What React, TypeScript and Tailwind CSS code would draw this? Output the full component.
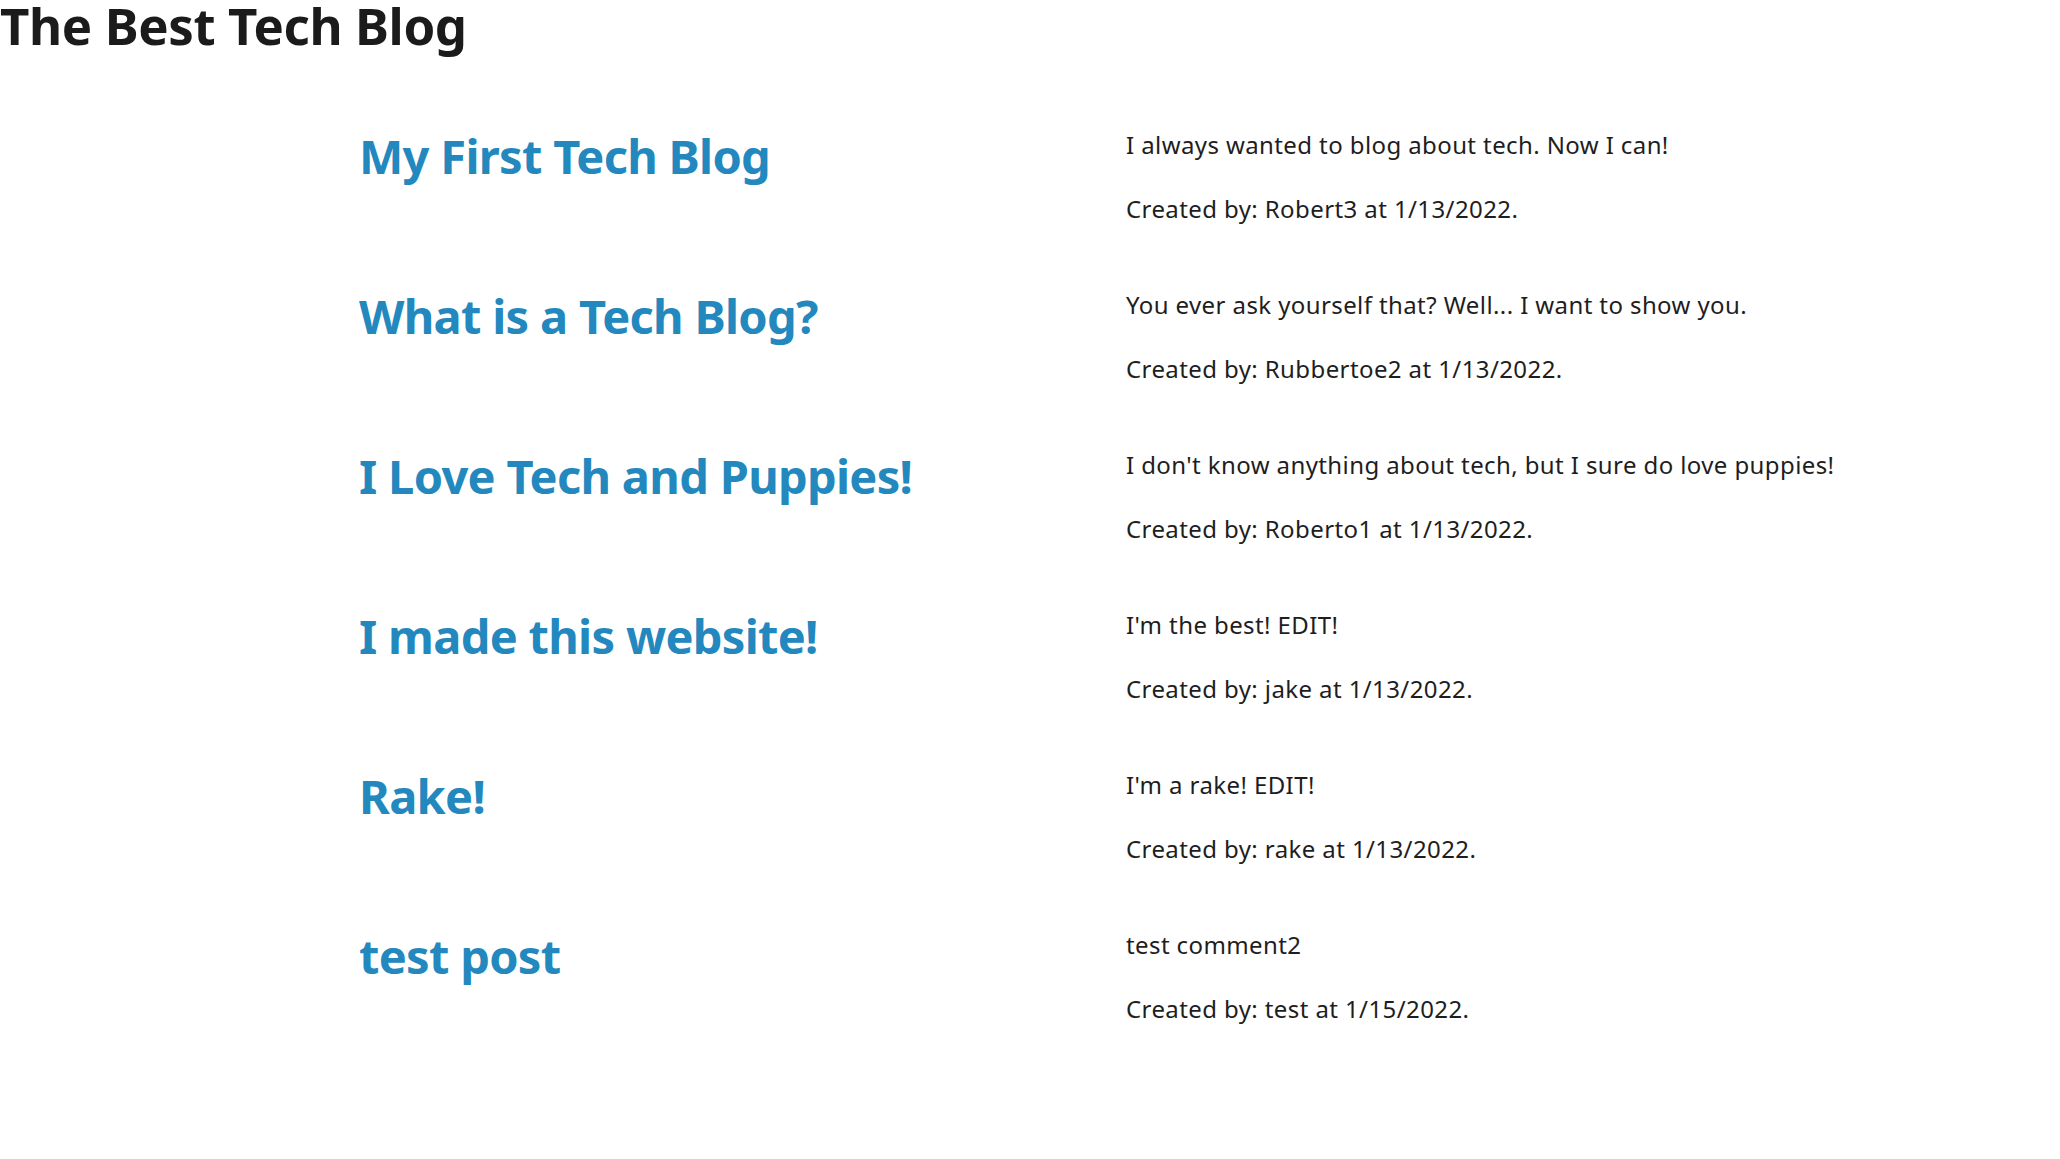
import React from 'react';

type Post = {
  title: string;
  body: string;
  author: string;
  date: string;
};

const posts: Post[] = [
  { title: 'My First Tech Blog', body: 'I always wanted to blog about tech. Now I can!', author: 'Robert3', date: '1/13/2022' },
  { title: 'What is a Tech Blog?', body: 'You ever ask yourself that? Well... I want to show you.', author: 'Rubbertoe2', date: '1/13/2022' },
  { title: 'I Love Tech and Puppies!', body: "I don't know anything about tech, but I sure do love puppies!", author: 'Roberto1', date: '1/13/2022' },
  { title: 'I made this website!', body: "I'm the best! EDIT!", author: 'jake', date: '1/13/2022' },
  { title: 'Rake!', body: "I'm a rake! EDIT!", author: 'rake', date: '1/13/2022' },
  { title: 'test post', body: 'test comment2', author: 'test', date: '1/15/2022' },
];

const App = () => {
  return (
    <div className="min-h-[1159px] bg-white text-[#1e1e1e] font-['Noto_Sans','Open_Sans',sans-serif]">
      <h1 className="text-[51px] font-bold leading-none tracking-[-0.4px] text-[#1b1b1b]">The Best Tech Blog</h1>
      <main className="pl-[359px] pt-[75px]">
        {posts.map((post) => (
          <article key={post.title} className="grid grid-cols-[767px_1fr] h-[160px]">
            <h2 className="mt-[7px] text-[47px] font-bold leading-none tracking-[-0.7px] text-[#2388be]">
              <a href="#">{post.title}</a>
            </h2>
            <div className="pt-[1px] text-[24px] leading-[36px] tracking-[0.4px]">
              <p>{post.body}</p>
              <p className="mt-[28px]">
                Created by: {post.author} at {post.date}.
              </p>
            </div>
          </article>
        ))}
      </main>
    </div>
  );
};

export default App;
